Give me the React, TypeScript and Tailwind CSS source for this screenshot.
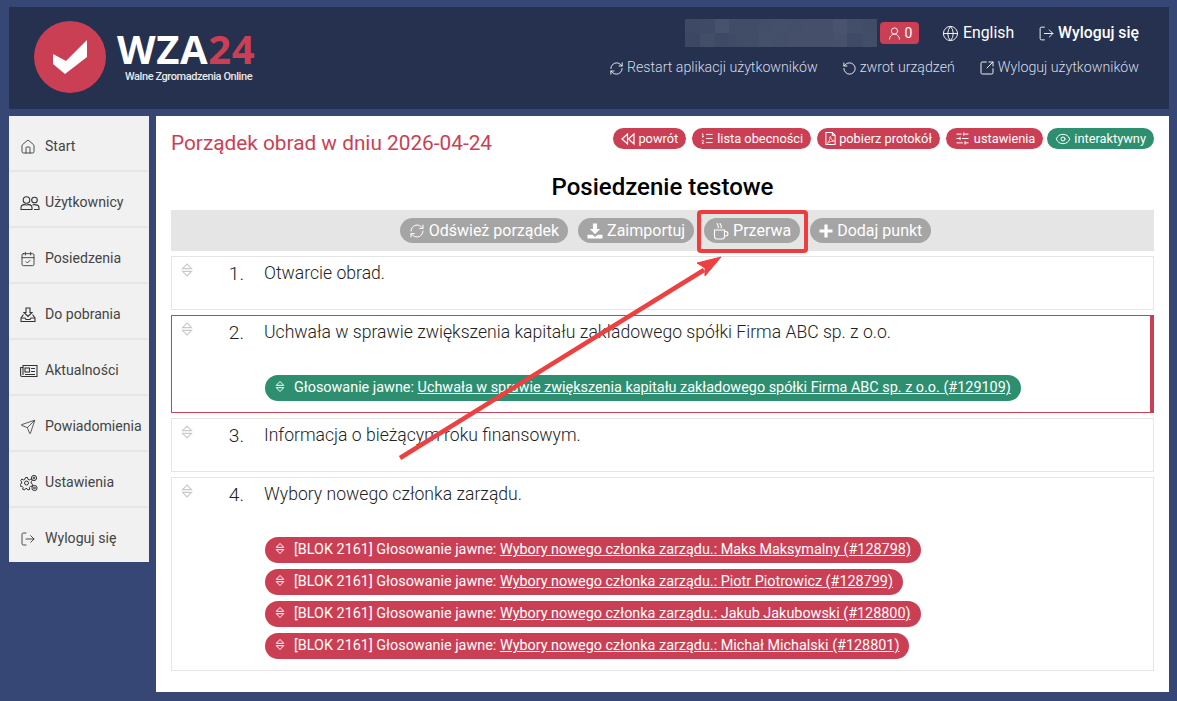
import React from "react";
import { Home, CalendarCheck, Send, LogOut, Globe, UserRound, RefreshCw, RotateCcw, SquareArrowOutUpRight, ListOrdered, SlidersHorizontal, Eye } from "lucide-react";

const font = "font-['Roboto',sans-serif]";

function Sort({ className, sw = 1.1 }: { className: string; sw?: number }) {
  return (
    <svg viewBox="0 0 12 14" className={className} fill="none" stroke="currentColor" strokeWidth={sw}>
      <path d="M6 1 10.5 5.6H1.5Z" />
      <path d="M6 13 10.5 8.4H1.5Z" />
    </svg>
  );
}

function InboxIn() {
  return (
    <svg viewBox="0 0 16 16" className="w-4 h-4" fill="none" stroke="currentColor" strokeWidth="1.1">
      <path d="M6 1h4v4.5h2L8 9.5 4 5.5h2Z" />
      <path d="M3.5 7.5 1 11v3.5h14V11l-2.5-3.5" />
      <path d="M1 11h4l1 1.5h4l1-1.5h4" />
    </svg>
  );
}

function Friends() {
  return (
    <svg viewBox="0 0 20 16" className="w-[20px] h-[16px]" fill="none" stroke="currentColor" strokeWidth="1.1">
      <circle cx="6.5" cy="5" r="3.3" />
      <path d="M1 14.5v-1.6C1 11 2.6 9.6 4.4 9.6c.9 0 1.2.4 2.1.4s1.200-.4 2.100-.4c1.800 0 3.400 1.400 3.400 3.300v1.600Z" />
      <circle cx="14.500" cy="5" r="2.800" />
      <path d="M12.500 9.900c.6-.2 1-.3 1.800-.3.700 0 1 .3 1.700.3 1.800 0 3 1.300 3 3v1.600h-5" />
    </svg>
  );
}

function News() {
  return (
    <svg viewBox="0 0 18 14" className="w-[18px] h-[14px]" fill="none" stroke="currentColor" strokeWidth="1.1">
      <path d="M3 1.500h14v11H2A1.500 1.500 0 0 1 .6 11V3.500H3Z" />
      <path d="M3 3.500V11" />
      <rect x="5" y="4" width="4.500" height="4" />
      <path d="M11 4.500h4M11 7.500h4M5 10.500h10" />
    </svg>
  );
}

function Cogs() {
  return (
    <svg viewBox="0 0 18 18" className="w-[18px] h-[18px]" fill="none" stroke="currentColor" strokeWidth="1">
      <circle cx="6.500" cy="9" r="2" />
      <path d="M5.500 3.500h2l.4 1.700 1.500.7 1.500-.9 1.200 1.500-1 1.400.2 1.600 1.400.8-.5 1.900-1.800.1-1 1.300.4 1.700-1.800.7-1-1.400H5.500l-1 1.400-1.800-.7.4-1.700-1-1.300-1.800-.1-.2-1.900 1.400-.8.2-1.600-1-1.400 1.200-1.500 1.500.9 1.500-.7Z" />
      <circle cx="14" cy="4" r="2.600" />
      <circle cx="14" cy="4" r="0.900" />
      <circle cx="14.500" cy="14" r="2.600" />
      <circle cx="14.500" cy="14" r="0.900" />
    </svg>
  );
}

function Backward() {
  return (
    <svg viewBox="0 0 14 14" className="w-[14px] h-[14px]" fill="none" stroke="currentColor" strokeWidth="1.2">
      <path d="M6.500 2 1 7l5.500 5Z" />
      <path d="M13 2 7.500 7l5.500 5Z" />
    </svg>
  );
}

function Pdf() {
  return (
    <svg viewBox="0 0 12 15" className="w-[11px] h-[15px]" fill="none" stroke="currentColor" strokeWidth="1.1">
      <path d="M1 1h7l3 3v10H1Z" />
      <path d="M8 1v3h3" />
      <path d="M2.700 12.500c1.500-.8 3-4.500 2.600-6.500 -.2-1 1-.9 1 .1 0 1.900 1.200 3.400 3 3.600 1.100.1 1 1-.2.900-2.200-.2-4.400.4-5.600 2.100Z" strokeWidth="0.800" />
    </svg>
  );
}

function SolidDownload() {
  return (
    <svg viewBox="0 0 17 17" className="w-4 h-4" fill="currentColor">
      <path d="M6.300 0.500h4.400v6h3.200L8.500 12 3.100 6.500h3.200Z" />
      <path d="M0.500 12.500h5.200L8.500 14.800l2.800-2.300h5.200v4h-16Z" />
    </svg>
  );
}

function SolidPlus() {
  return (
    <svg viewBox="0 0 14 14" className="w-[14px] h-[14px]" fill="currentColor">
      <path d="M5.400 0.500h3.200v4.900h4.900v3.200H8.600v4.900H5.400V8.600H0.500V5.400h4.900Z" />
    </svg>
  );
}

function Mug() {
  return (
    <svg viewBox="0 0 16 18" className="w-4 h-[18px]" fill="none" stroke="currentColor" strokeWidth="1.100">
      <path d="M1.500 8h10v6.500a2.500 2.500 0 0 1-2.500 2.500H4a2.500 2.500 0 0 1-2.500-2.500Z" />
      <path d="M11.500 9.500h1.200a2 2 0 0 1 0 4.500h-1.200" />
      <path d="M4 1c0 1.500 1.300 2 1.300 3.500 0 .8-.3 1.200-.3 1.700M7 1c0 1.500 1.300 2 1.300 3.500 0 .8-.3 1.200-.3 1.700" />
    </svg>
  );
}

const side: [React.ReactNode, string][] = [
  [<Home className="w-4 h-4" strokeWidth={1.3} />, "Start"],
  [<Friends />, "Użytkownicy"],
  [<CalendarCheck className="w-4 h-4" strokeWidth={1.3} />, "Posiedzenia"],
  [<InboxIn />, "Do pobrania"],
  [<News />, "Aktualności"],
  [<Send className="w-4 h-4" strokeWidth={1.2} />, "Powiadomienia"],
  [<Cogs />, "Ustawienia"],
  [<LogOut className="w-4 h-4" strokeWidth={1.3} />, "Wyloguj się"],
];

const mosaic = [
  "bg-[#3e4a65]", "bg-[#3f4b66]", "bg-[#47526c]", "bg-[#414c67]", "bg-[#414c67]", "bg-[#434e68]", "bg-[#454f6a]", "bg-[#434e68]", "bg-[#454f6a]", "bg-[#464f69]", "bg-[#4a536d]", "bg-[#434e68]", "bg-[#414c67]",
  "bg-[#3c4863]", "bg-[#424d68]", "bg-[#3e4a65]", "bg-[#404b66]", "bg-[#414c67]", "bg-[#454f6a]", "bg-[#434e68]", "bg-[#454f6a]", "bg-[#464f69]", "bg-[#464f69]", "bg-[#47516b]", "bg-[#3f4b66]", "bg-[#424d68]",
];

function Pill({ bg, icon, label }: { bg: string; icon: React.ReactNode; label: string }) {
  return (
    <span className={`h-[21px] px-[8px] rounded-full flex items-center gap-[3px] text-[12.8px] text-white whitespace-nowrap ${bg}`}>
      {icon}
      {label}
    </span>
  );
}

function BarBtn({ icon, label }: { icon: React.ReactNode; label: string }) {
  return (
    <span className="h-[25px] px-[9px] rounded-full bg-[#a5a5a5] text-white text-[16px] flex items-center gap-[4px] whitespace-nowrap">
      {icon}
      {label}
    </span>
  );
}

function Vote({ bg, prefix, link }: { bg: string; prefix: string; link: string }) {
  return (
    <div className={`h-[26px] w-fit ml-[1px] rounded-full pl-[10px] pr-[10px] flex items-center text-white text-[14.4px] whitespace-nowrap ${bg}`}>
      <Sort className="w-[10px] h-[13px] mr-[9px] mb-[3px]" sw={1.2} />
      <span>{prefix}&nbsp;</span>
      <span className="underline">{link}</span>
    </div>
  );
}

function Row({ n, title, active, height, children }: { n: number; title: string; active?: boolean; height: string; children?: React.ReactNode }) {
  return (
    <div className={`flex border ${height} ${active ? "border-[#cb3f55] border-r-4" : "border-[#e5e5e5]"}`}>
      <div className="w-[30px] pl-[9px] pt-[6px] shrink-0">
        <Sort className="w-[12px] h-[14px] text-[#c9c9c9]" />
      </div>
      <div className="w-[42px] pt-[5px] text-right text-[19.2px] leading-[24px] font-light text-[#222] shrink-0">{n}.</div>
      <div className="pl-[20px] pt-[4px] flex-1">
        <div className="text-[17.6px] leading-[24px] font-light text-[#222] whitespace-nowrap">{title}</div>
        {children}
      </div>
    </div>
  );
}

const ml = "Wybory nowego członka zarządu.: ";

export default function App() {
  return (
    <div className={`${font} relative w-[1177px] h-[701px] bg-[#364776] overflow-hidden pt-[7px] px-[9px] pr-[8px]`}>
      <header className="h-[102px] bg-[#25314e] flex justify-between pl-[25px] pr-[30px]">
        <div className="flex items-center gap-[11px] pb-[2px]">
          <div className="w-[72px] h-[72px] rounded-full bg-[#cb3f55] flex items-center justify-center">
            <svg viewBox="0 0 34 34" className="w-[34px] h-[34px]">
              <path d="M0 14 13 21 34 0V17L12 34 0 24Z" fill="#fff" />
            </svg>
          </div>
          <div className="flex flex-col items-end">
            <div className="font-['Open_Sans',sans-serif] font-bold text-[40px] leading-[34px] tracking-[0.6px] text-white">
              WZA<span className="text-[#cb3f55]">24</span>
            </div>
            <div className="text-[11px] leading-[12px] font-medium text-[#e8e8e8] tracking-[-0.42px] mr-[3px] mt-[5px]">Walne Zgromadzenia Online</div>
          </div>
        </div>
        <div className="flex flex-col items-end">
          <div className="flex items-center h-[28px] mt-[12px] text-white text-[15.8px]">
            <div className="w-[192px] h-[28px] grid grid-cols-[repeat(13,1fr)] grid-rows-2 mr-[3px]">
              {mosaic.map((c, i) => (
                <div key={i} className={c} />
              ))}
            </div>
            <span className="h-[22px] w-[39px] rounded-[4px] bg-[#cb3f55] flex items-center justify-center gap-[3px] text-[14px]">
              <UserRound className="w-[15px] h-[15px]" strokeWidth={1.4} />0
            </span>
            <Globe className="w-[17px] h-[17px] ml-[23px] mr-[4px]" strokeWidth={1.3} />
            <span>English</span>
            <LogOut className="w-[17px] h-[17px] ml-[24px] mr-[3px]" strokeWidth={1.3} />
            <span className="font-medium">Wyloguj się</span>
          </div>
          <div className="flex items-center mt-[9px] h-[24px] text-[14.2px] font-light text-[#d5dbe6]">
            <RefreshCw className="w-[15px] h-[15px] mr-[3px] text-white" strokeWidth={1.4} />
            <span>Restart aplikacji użytkowników</span>
            <RotateCcw className="w-[15px] h-[15px] ml-[24px] mr-[3px] text-white" strokeWidth={1.4} />
            <span>zwrot urządzeń</span>
            <SquareArrowOutUpRight className="w-4 h-4 ml-[24px] mr-[3px] text-white" strokeWidth={1.4} />
            <span>Wyloguj użytkowników</span>
          </div>
        </div>
      </header>

      <div className="flex gap-[7px] mt-[7px]">
        <nav className="w-[140px] h-[446px] bg-[#f1f1f1] shrink-0 flex flex-col">
          {side.map(([icon, label], i) => (
            <div key={label} className={`shrink-0 pt-[8px] flex items-center text-[14.1px] text-[#444] ${i < 7 ? "h-[56px] border-b-2 border-[#e6e6e6]" : "h-[54px]"}`}>
              <span className="w-[36px] pl-[11px] shrink-0 flex items-center text-[#333]">{icon}</span>
              <span className="whitespace-nowrap">{label}</span>
            </div>
          ))}
        </nav>

        <main className="w-[1013px] h-[576px] bg-white px-[15px] pt-[12px]">
          <div className="flex justify-between items-center h-[32px]">
            <h1 className="text-[20.8px] text-[#cb3f55]">Porządek obrad w dniu 2026-04-24</h1>
            <div className="flex items-center gap-[6px] pb-[11px]">
              <Pill bg="bg-[#cb3f55]" icon={<Backward />} label="powrót" />
              <Pill bg="bg-[#cb3f55]" icon={<ListOrdered className="w-[14px] h-[15px]" strokeWidth={1.5} />} label="lista obecności" />
              <Pill bg="bg-[#cb3f55]" icon={<Pdf />} label="pobierz protokół" />
              <Pill bg="bg-[#cb3f55]" icon={<SlidersHorizontal className="w-[17px] h-[15px]" strokeWidth={1.6} />} label="ustawienia" />
              <Pill bg="bg-[#2d8f6f] -ml-[2px]" icon={<Eye className="w-4 h-4" strokeWidth={1.5} />} label="interaktywny" />
            </div>
          </div>
          <h2 className="text-[24px] leading-[28px] font-medium text-black text-center mt-[13px] mb-[9px]">Posiedzenie testowe</h2>
          <div className="h-[41px] bg-[#e5e5e5] flex items-center justify-center gap-[10px] pl-[6px]">
            <BarBtn icon={<RefreshCw className="w-4 h-4" strokeWidth={1.5} />} label="Odśwież porządek" />
            <BarBtn icon={<SolidDownload />} label="Zaimportuj" />
            <BarBtn icon={<Mug />} label="Przerwa" />
            <BarBtn icon={<SolidPlus />} label="Dodaj punkt" />
          </div>
          <div className="flex flex-col gap-[5px] mt-[5px]">
            <Row n={1} title="Otwarcie obrad." height="h-[54px]" />
            <Row n={2} title="Uchwała w sprawie zwiększenia kapitału zakładowego spółki Firma ABC sp. z o.o." active height="h-[98px]">
              <div className="mt-[31px]">
                <Vote bg="bg-[#2d8f6f]" prefix="Głosowanie jawne:" link="Uchwała w sprawie zwiększenia kapitału zakładowego spółki Firma ABC sp. z o.o. (#129109)" />
              </div>
            </Row>
            <Row n={3} title="Informacja o bieżącym roku finansowym." height="h-[54px]" />
            <Row n={4} title="Wybory nowego członka zarządu." height="h-[194px]">
              <div className="mt-[31px] flex flex-col gap-[6px]">
                <Vote bg="bg-[#cb3f55]" prefix="[BLOK 2161] Głosowanie jawne:" link={ml + "Maks Maksymalny (#128798)"} />
                <Vote bg="bg-[#cb3f55]" prefix="[BLOK 2161] Głosowanie jawne:" link={ml + "Piotr Piotrowicz (#128799)"} />
                <Vote bg="bg-[#cb3f55]" prefix="[BLOK 2161] Głosowanie jawne:" link={ml + "Jakub Jakubowski (#128800)"} />
                <Vote bg="bg-[#cb3f55]" prefix="[BLOK 2161] Głosowanie jawne:" link={ml + "Michał Michalski (#128801)"} />
              </div>
            </Row>
          </div>
        </main>
      </div>

      {/* annotation overlay */}
      <div className="absolute left-[697px] top-[210px] w-[111px] h-[43px] border-4 border-[#ee3d3d] rounded-[4px]" />
      <svg className="absolute left-0 top-0 w-[1177px] h-[701px] pointer-events-none" viewBox="0 0 1177 701">
        <path d="M400 458 704 270" stroke="#ee4040" strokeWidth="4.5" fill="none" />
        <path d="M721 257 697 263 705 268 705 276Z" fill="#ee4040" stroke="#ee4040" strokeWidth="1" />
      </svg>
    </div>
  );
}
